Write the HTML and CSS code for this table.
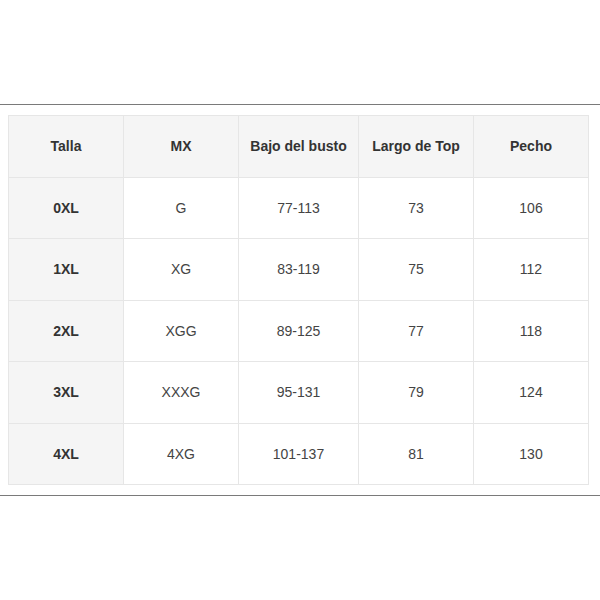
FILE: index.html
```html
<!DOCTYPE html>
<html lang="es">
<head>
<meta charset="utf-8">
<title>Tabla de tallas</title>
<link rel="stylesheet" href="styles.css">
</head>
<body>
<div class="frame">
  <table class="sizes">
    <colgroup>
      <col class="c1"><col class="c2"><col class="c3"><col class="c4"><col class="c5">
    </colgroup>
    <thead>
      <tr><th>Talla</th><th>MX</th><th>Bajo del busto</th><th>Largo de Top</th><th>Pecho</th></tr>
    </thead>
    <tbody>
      <tr><th>0XL</th><td>G</td><td>77-113</td><td>73</td><td>106</td></tr>
      <tr><th>1XL</th><td>XG</td><td>83-119</td><td>75</td><td>112</td></tr>
      <tr><th>2XL</th><td>XGG</td><td>89-125</td><td>77</td><td>118</td></tr>
      <tr><th>3XL</th><td>XXXG</td><td>95-131</td><td>79</td><td>124</td></tr>
      <tr><th>4XL</th><td>4XG</td><td>101-137</td><td>81</td><td>130</td></tr>
    </tbody>
  </table>
</div>
</body>
</html>
```
FILE: styles.css
```css
html, body {
  margin: 0;
  padding: 0;
  background: #fff;
}
body {
  font-family: "Liberation Sans", Arial, sans-serif;
  font-size: 14px;
  color: #444;
}
.frame {
  margin-top: 104px;
  border-top: 1px solid #7a7a7a;
  border-bottom: 1px solid #7a7a7a;
  padding: 10px 12px 10px 8px;
}
.sizes {
  border-collapse: collapse;
  width: 580px;
  table-layout: fixed;
}
.c1, .c2, .c4, .c5 { width: 115px; }
.c3 { width: 120px; }
.sizes th, .sizes td {
  border: 1px solid #e6e6e6;
  text-align: center;
  height: 60.5px;
  padding: 0;
}
.sizes th {
  background: #f5f5f5;
  color: #333;
  font-weight: bold;
}
.sizes td {
  background: #fff;
}
```
